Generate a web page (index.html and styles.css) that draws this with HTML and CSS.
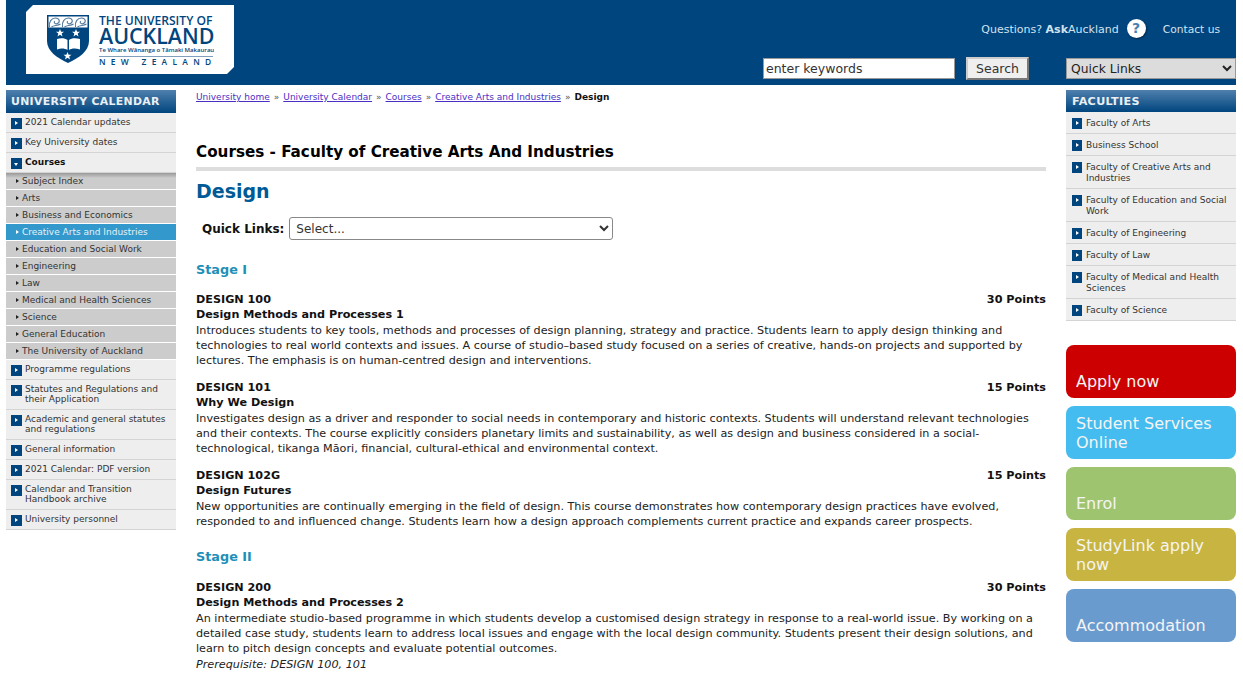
FILE: index.html
```html
<!DOCTYPE html>
<html lang="en">
<head>
  <meta charset="UTF-8">
  <title>Design - University Calendar</title>
  <link rel="stylesheet" href="styles.css">
</head>
<body>
  <header class="site-header">
    <a class="logo" href="#">
      <svg class="crest" width="42" height="48" viewBox="0 0 42 48">
        <defs>
          <path id="star" d="M0 -4L1.100 -1.300H4L1.700 .6L2.500 3.400L0 1.800L-2.500 3.400L-1.700 .6L-4 -1.300H-1.100Z" fill="#fff"/>
          <g id="fern" fill="none" stroke="#54789c" stroke-width="1.100">
            <path d="M1 11C0 6 3 2 7 2C11 2 12 6 9 7.500C7 8.500 5 7 6 5"/>
            <path d="M3 11C5 9 9 10 12 8"/>
          </g>
        </defs>
        <path d="M0 0H42V26C42 36 32 43 21 48C10 43 0 36 0 26Z" fill="#00457e"/>
        <rect x="1.500" y="1.500" width="39" height="11" fill="#fff"/>
        <use href="#fern" x="1.500" y="1"/>
        <use href="#fern" x="14.500" y="1"/>
        <use href="#fern" x="27.500" y="1"/>
        <use href="#star" x="13" y="18"/>
        <use href="#star" x="29" y="18"/>
        <use href="#star" x="20.500" y="41"/>
        <path d="M10 24C14 22.500 18 23 20.500 25V35C18 33.500 14 33 10 34.500ZM22 25C24.500 23 28 22.500 33 24V34.500C28 33 24.500 33.500 22 35Z" fill="#fff"/>
      </svg>
      <span class="wordmark">
        <span class="wm-the">THE UNIVERSITY OF</span>
        <span class="wm-auckland">AUCKLAND</span>
        <span class="wm-maori">Te Whare Wānanga o Tāmaki Makaurau</span>
        <span class="wm-nz">NEW ZEALAND</span>
      </span>
    </a>
    <div class="header-right">
      <div class="header-links">
        <span class="link-text">Questions? <b>Ask</b>Auckland</span>
        <span class="help-icon">?</span>
        <a class="link-text contact" href="#">Contact us</a>
      </div>
      <form class="header-tools">
        <input class="search-input" type="text" value="enter keywords">
        <button class="search-btn" type="button">Search</button>
        <select class="quick-select">
          <option>Quick Links</option>
        </select>
      </form>
    </div>
  </header>

  <div class="page">
    <nav class="side-left">
      <h3 class="side-head">UNIVERSITY CALENDAR</h3>
      <ul class="side-menu">
        <li><a href="#">2021 Calendar updates</a></li>
        <li><a href="#">Key University dates</a></li>
        <li class="open"><a href="#">Courses</a></li>
      </ul>
      <ul class="sub-menu">
        <li><a href="#">Subject Index</a></li>
        <li><a href="#">Arts</a></li>
        <li><a href="#">Business and Economics</a></li>
        <li class="active"><a href="#">Creative Arts and Industries</a></li>
        <li><a href="#">Education and Social Work</a></li>
        <li><a href="#">Engineering</a></li>
        <li><a href="#">Law</a></li>
        <li><a href="#">Medical and Health Sciences</a></li>
        <li><a href="#">Science</a></li>
        <li><a href="#">General Education</a></li>
        <li><a href="#">The University of Auckland</a></li>
      </ul>
      <ul class="side-menu">
        <li><a href="#">Programme regulations</a></li>
        <li><a href="#">Statutes and Regulations and their Application</a></li>
        <li><a href="#">Academic and general statutes and regulations</a></li>
        <li><a href="#">General information</a></li>
        <li><a href="#">2021 Calendar: PDF version</a></li>
        <li><a href="#">Calendar and Transition Handbook archive</a></li>
        <li><a href="#">University personnel</a></li>
      </ul>
    </nav>

    <main class="content">
      <p class="breadcrumb">
        <a href="#">University home</a><span class="sep">»</span><a href="#">University Calendar</a><span class="sep">»</span><a href="#">Courses</a><span class="sep">»</span><a href="#">Creative Arts and Industries</a><span class="sep">»</span><b>Design</b>
      </p>
      <h2 class="page-title">Courses - Faculty of Creative Arts And Industries</h2>
      <h1 class="subject">Design</h1>
      <form class="quick-form">
        <label for="quick">Quick Links:</label>
        <select id="quick" class="quick-jump">
          <option>Select...</option>
        </select>
      </form>

      <h3 class="stage">Stage I</h3>
      <section class="course">
        <div class="course-top"><b>DESIGN 100</b><b>30 Points</b></div>
        <h4>Design Methods and Processes 1</h4>
        <p>Introduces students to key tools, methods and processes of design planning, strategy and practice. Students learn to apply design thinking and technologies to real world contexts and issues. A course of studio–based study focused on a series of creative, hands-on projects and supported by lectures. The emphasis is on human-centred design and interventions.</p>
      </section>
      <section class="course">
        <div class="course-top"><b>DESIGN 101</b><b>15 Points</b></div>
        <h4>Why We Design</h4>
        <p>Investigates design as a driver and responder to social needs in contemporary and historic contexts. Students will understand relevant technologies and their contexts. The course explicitly considers planetary limits and sustainability, as well as design and business considered in a social-technological, tikanga Māori, financial, cultural-ethical and environmental context.</p>
      </section>
      <section class="course">
        <div class="course-top"><b>DESIGN 102G</b><b>15 Points</b></div>
        <h4>Design Futures</h4>
        <p>New opportunities are continually emerging in the field of design. This course demonstrates how contemporary design practices have evolved, responded to and influenced change. Students learn how a design approach complements current practice and expands career prospects.</p>
      </section>

      <h3 class="stage">Stage II</h3>
      <section class="course">
        <div class="course-top"><b>DESIGN 200</b><b>30 Points</b></div>
        <h4>Design Methods and Processes 2</h4>
        <p>An intermediate studio-based programme in which students develop a customised design strategy in response to a real-world issue. By working on a detailed case study, students learn to address local issues and engage with the local design community. Students present their design solutions, and learn to pitch design concepts and evaluate potential outcomes.</p>
        <p class="prereq">Prerequisite: DESIGN 100, 101</p>
      </section>
    </main>

    <aside class="side-right">
      <h3 class="side-head fac-head">FACULTIES</h3>
      <ul class="side-menu fac-menu">
        <li><a href="#">Faculty of Arts</a></li>
        <li><a href="#">Business School</a></li>
        <li><a href="#">Faculty of Creative Arts and Industries</a></li>
        <li><a href="#">Faculty of Education and Social Work</a></li>
        <li><a href="#">Faculty of Engineering</a></li>
        <li><a href="#">Faculty of Law</a></li>
        <li><a href="#">Faculty of Medical and Health Sciences</a></li>
        <li><a href="#">Faculty of Science</a></li>
      </ul>
      <div class="promo-list">
        <a class="promo red" href="#">Apply now</a>
        <a class="promo sky" href="#">Student Services Online</a>
        <a class="promo green" href="#">Enrol</a>
        <a class="promo gold" href="#">StudyLink apply now</a>
        <a class="promo steel" href="#">Accommodation</a>
      </div>
    </aside>
  </div>
</body>
</html>
```

FILE: styles.css
```css
html {
  overflow: hidden;
}
body {
  margin: 0 7px 0 6px;
  font-family: "DejaVu Sans", Verdana, sans-serif;
  font-size: 11.2px;
  line-height: 15px;
  color: #222;
  background: #fff;
}
ul {
  list-style: none;
  margin: 0;
  padding: 0;
}

/* header */
.site-header {
  display: flex;
  justify-content: space-between;
  height: 85px;
  padding-left: 20px;
  background: #00457e;
}
.logo {
  display: flex;
  gap: 10px;
  width: 208px;
  height: 69px;
  margin-top: 5px;
  padding: 10px 0 0 21px;
  box-sizing: border-box;
  background: #fff;
  color: #00457e;
  text-decoration: none;
  clip-path: polygon(7px 0, 100% 0, 100% 62px, 201px 100%, 0 100%, 0 7px);
}
.crest {
  flex: none;
}
.wordmark {
  display: flex;
  flex-direction: column;
  width: 114px;
  font-family: "Open Sans", sans-serif;
  font-weight: 600;
  white-space: nowrap;
}
.wm-the {
  font-size: 12.100px;
  line-height: 11px;
}
.wm-auckland {
  font-size: 21.400px;
  line-height: 20px;
}
.wm-maori {
  font-size: 6px;
  line-height: 8px;
  padding-bottom: 2px;
  border-bottom: 1px solid #7f9fbd;
}
.wm-nz {
  font-size: 8.400px;
  line-height: 10px;
  letter-spacing: 5.300px;
}
.header-right {
  display: flex;
  flex-direction: column;
  justify-content: space-between;
  align-items: flex-end;
}
.header-links {
  display: flex;
  align-items: center;
  margin-top: 19px;
  margin-right: 16px;
  color: #d4e2ee;
  font-size: 11px;
}
.link-text {
  padding-top: 2px;
}
.contact {
  margin-left: 17px;
  color: #d4e2ee;
  font-size: 10.700px;
  text-decoration: none;
}
.help-icon {
  width: 19px;
  height: 19px;
  margin-left: 8px;
  border-radius: 50%;
  background: #fff;
  box-shadow: 1px 1px 2px rgba(0, 0, 0, 0.4);
  color: #4a7fb0;
  font-size: 14px;
  font-weight: bold;
  line-height: 19px;
  text-align: center;
}
.header-tools {
  display: flex;
  align-items: center;
  margin-bottom: 5px;
}
.search-input {
  width: 192px;
  height: 21px;
  padding: 0 1px 0 2px;
  box-sizing: border-box;
  border: 1px solid #999;
  font: 12.500px "DejaVu Sans", sans-serif;
  color: #333;
}
.search-btn {
  width: 63px;
  height: 23px;
  margin-left: 11px;
  padding: 0;
  border: 2px outset #ccc;
  background: #efefef;
  font: 12.500px "DejaVu Sans", sans-serif;
  color: #333;
}
.quick-select {
  width: 170px;
  height: 21px;
  margin-left: 37px;
  border: 1px solid #999;
  background: #dcdcdc;
  font: 12.300px "DejaVu Sans", sans-serif;
  color: #222;
}

/* columns */
.page {
  display: grid;
  grid-template-columns: 170px 850px 170px;
  gap: 20px;
  padding-top: 5px;
}

/* side menus */
.side-head {
  height: 23px;
  margin: 0;
  padding-left: 5px;
  background: linear-gradient(#4f80ad, #00457e);
  color: #e8f0f6;
  font-size: 10.900px;
  line-height: 23px;
  font-weight: bold;
  letter-spacing: 0.300px;
}
.side-menu li {
  border-bottom: 1px solid #d4d4d4;
  background: #eee;
}
.side-menu a {
  display: block;
  position: relative;
  padding: 4px 10px 5px 19px;
  color: #333;
  font-size: 9px;
  line-height: 10px;
  text-decoration: none;
}
.side-menu a::before {
  content: "";
  position: absolute;
  left: 5px;
  top: 5px;
  width: 11px;
  height: 11px;
  background: #00457e;
}
.side-menu a::after {
  content: "";
  position: absolute;
  left: 9px;
  top: 8px;
  border-style: solid;
  border-width: 2.500px 0 2.500px 3px;
  border-color: transparent transparent transparent #fff;
}
.side-menu .open a {
  color: #111;
  font-weight: bold;
}
.side-menu .open a::after {
  left: 8px;
  top: 10px;
  border-width: 3px 2.500px 0;
  border-color: #fff transparent transparent;
}
.sub-menu li {
  height: 16px;
  border-bottom: 1px solid #fff;
  background: #ccc;
}
.sub-menu li:first-child {
  background: linear-gradient(#999, #ccc 5px);
}
.sub-menu a {
  display: block;
  position: relative;
  padding-left: 16px;
  color: #333;
  font-size: 9px;
  line-height: 16px;
  text-decoration: none;
}
.sub-menu a::before {
  content: "";
  position: absolute;
  left: 10px;
  top: 6px;
  border-style: solid;
  border-width: 2.500px 0 2.500px 3px;
  border-color: transparent transparent transparent #222;
}
.sub-menu .active {
  background: #3399cc;
}
.sub-menu .active a {
  color: #e4f1f8;
}
.sub-menu .active a::before {
  border-left-color: #fff;
}

/* main column */
.breadcrumb {
  margin: 0;
  font-size: 9px;
  line-height: 14px;
  color: #555;
}
.breadcrumb a {
  color: #4b2fc4;
}
.breadcrumb b {
  color: #111;
}
.sep {
  margin: 0 4px;
}
.page-title {
  margin: 36px 0 0;
  padding-bottom: 3px;
  border-bottom: 4px solid #ddd;
  color: #000;
  font-size: 15.200px;
  line-height: 24px;
}
.subject {
  margin: 8px 0 0;
  color: #005a96;
  font-size: 19px;
  line-height: 24px;
}
.quick-form {
  display: flex;
  align-items: center;
  gap: 5px;
  margin: 14px 0 0 6px;
}
.quick-form label {
  padding-top: 1px;
  color: #111;
  font-size: 12px;
  font-weight: bold;
}
.quick-jump {
  width: 324px;
  height: 23px;
  padding-left: 2px;
  border: 1px solid #888;
  border-radius: 3px;
  background: #fff;
  font: 12px "DejaVu Sans", sans-serif;
  color: #333;
}
.stage {
  margin: 21px 0 13px;
  color: #1e90b8;
  font-size: 12.800px;
  line-height: 18px;
}
.course + .stage {
  margin-top: 19px;
  margin-bottom: 14px;
}
.course {
  margin-bottom: 12px;
}
.course-top {
  display: flex;
  justify-content: space-between;
  color: #111;
}
.course h4 {
  margin: 0;
  color: #111;
  font-size: 11.200px;
  line-height: 15px;
}
.course p {
  margin: 1px 0 0;
}
.course .prereq {
  font-style: italic;
}

/* right column */
.fac-head {
  height: 22px;
  padding-left: 6px;
  line-height: 23px;
  font-size: 11.200px;
}
.fac-menu a {
  padding: 6px 8px 4px 20px;
  line-height: 11px;
}
.fac-menu a::before {
  left: 6px;
  top: 6px;
  width: 10px;
}
.fac-menu a::after {
  left: 9.500px;
  top: 9px;
}
.promo-list {
  display: flex;
  flex-direction: column;
  gap: 8px;
  margin-top: 24px;
}
.promo {
  display: flex;
  align-items: flex-end;
  height: 53px;
  padding: 0 10px 7px;
  box-sizing: border-box;
  border-radius: 8px;
  color: #f4f4f4;
  font-size: 16px;
  line-height: 19px;
  text-decoration: none;
}
.red { background: #cc0000; }
.sky { background: #45bcef; }
.green { background: #9fc46f; }
.gold { background: #c8b441; }
.steel { background: #6a9bcf; }
```
